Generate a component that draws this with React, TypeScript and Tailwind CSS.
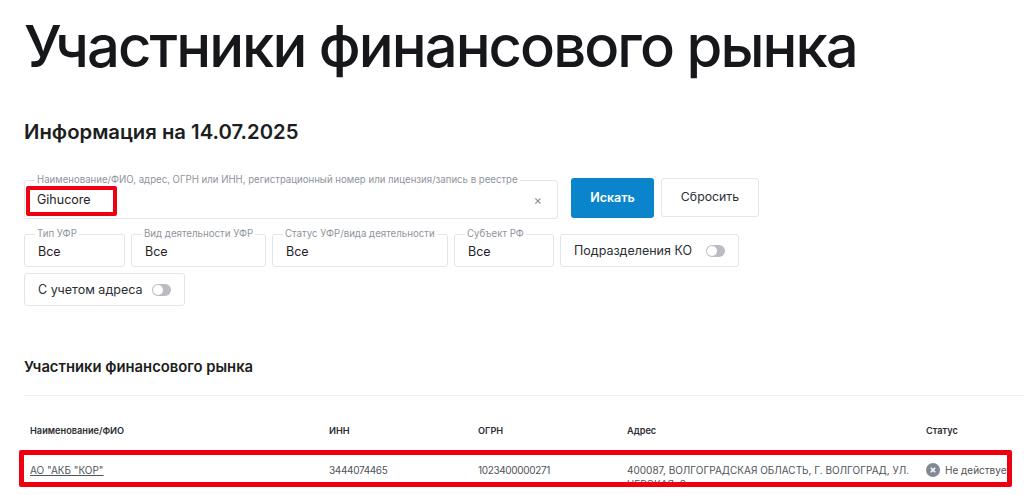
import React from "react";

function Field({ label, value, width }: { label: string; value: string; width: string }) {
  return (
    <fieldset className={`${width} h-[37px] shrink-0 rounded-[3px] border border-[#e3e5e8] pl-[13px] pr-2`}>
      <legend className="-ml-[3px] whitespace-nowrap px-[2px] text-[9.7px] leading-[8px] text-[#8f949c]">{label}</legend>
      <div className="mt-[5px] text-[12.5px] leading-[18px] text-[#1f2226]">{value}</div>
    </fieldset>
  );
}

function Toggle({ label, width }: { label: string; width: string }) {
  return (
    <div className={`${width} flex h-[33px] shrink-0 items-center justify-between rounded-[3px] border border-[#e3e5e8] px-[13px]`}>
      <span className="pt-[2px] text-[12.5px] text-[#2b2e33]">{label}</span>
      <span className="flex h-[12px] w-[19px] items-center rounded-full bg-[#b9bdc3] pl-[1px]">
        <span className="h-[10px] w-[10px] rounded-full bg-white" />
      </span>
    </div>
  );
}

export default function App() {
  return (
    <div className="h-[495px] w-[1024px] overflow-hidden bg-white font-['Inter',sans-serif] text-[#1a1c1f]">
      <div className="pl-6">
        <h1 className="pt-[10px] text-[58px] font-medium leading-[72px] tracking-[-1.95px] text-[#15171a]">
          Участники финансового рынка
        </h1>
        <h2 className="mt-[36px] text-[20.3px] font-semibold leading-[28px] text-[#1c1e21]">Информация на 14.07.2025</h2>

        <div className="mt-[32px] flex items-start">
          <fieldset className="relative -mt-[2px] h-[43px] w-[534px] shrink-0 rounded-[3px] border border-[#e3e5e8] pl-[12px] pr-2">
            <legend className="-ml-[2px] whitespace-nowrap px-[2px] text-[9.65px] leading-[8px] text-[#8f949c]">
              Наименование/ФИО, адрес, ОГРН или ИНН, регистрационный номер или лицензия/запись в реестре
            </legend>
            <div className="flex items-center justify-between pr-[7px] pt-[6px]">
              <span className="text-[12.5px] leading-[20px] text-[#1f2226]">Gihucore</span>
              <span className="text-[13px] leading-[20px] text-[#8b9099]">×</span>
            </div>
            {/* red annotation around the query */}
            <div className="absolute left-[1px] top-[2px] h-[30px] w-[91px] rounded-[2px] border-[4px] border-[#ee0010]" />
          </fieldset>
          <button className="ml-[13px] h-[40px] w-[83px] rounded-[3px] bg-[#0a85cc] text-[12.5px] font-semibold text-white">
            Искать
          </button>
          <button className="ml-[7px] h-[39px] w-[98px] rounded-[3px] border border-[#e3e5e8] text-[12.3px] text-[#2b2e33]">
            Сбросить
          </button>
        </div>

        <div className="mt-[11px] flex items-end gap-[6px]">
          <Field label="Тип УФР" value="Все" width="w-[101px]" />
          <Field label="Вид деятельности УФР" value="Все" width="w-[135px]" />
          <Field label="Статус УФР/вида деятельности" value="Все" width="w-[176px]" />
          <Field label="Субъект РФ" value="Все" width="w-[100px]" />
          <Toggle label="Подразделения КО" width="w-[179px]" />
        </div>
        <div className="mt-[6px] flex">
          <Toggle label="С учетом адреса" width="w-[161px]" />
        </div>

        <h3 className="mt-[51px] text-[14.8px] font-semibold leading-[20px] text-[#1c1e21]">Участники финансового рынка</h3>
        <div className="mt-[18px] h-px bg-[#f0f1f2]" />

        <div className="mt-[29px] grid grid-cols-[299px_149px_149px_299px_80px] pl-[6px] text-[9.2px] font-semibold leading-[12px] text-[#2b2e33]">
          <div>Наименование/ФИО</div>
          <div>ИНН</div>
          <div>ОГРН</div>
          <div>Адрес</div>
          <div>Статус</div>
        </div>

        {/* result row, clipped by the annotation box */}
        <div className="relative -ml-[5px] mt-[13px] h-[37px] w-[993px] overflow-hidden">
          <div className="grid grid-cols-[299px_149px_149px_299px_100px] items-start pl-[11px] pt-[13px] text-[10px] leading-[14px] text-[#4f535a]">
            <a className="underline">АО "АКБ "КОР"</a>
            <div className="tracking-[-0.35px]">3444074465</div>
            <div className="tracking-[-0.35px]">1023400000271</div>
            <div>400087, ВОЛГОГРАДСКАЯ ОБЛАСТЬ, Г. ВОЛГОГРАД, УЛ. ЦЕРСКАЯ, 3</div>
            <div className="flex items-center gap-[5px] whitespace-nowrap">
              <svg viewBox="0 0 14 14" className="h-[14px] w-[14px] shrink-0">
                <circle cx="7" cy="7" r="7" fill="#808994" />
                <path d="M4.8 4.8l4.4 4.4M9.2 4.8l-4.4 4.4" stroke="#fff" strokeWidth="1.5" />
              </svg>
              <span>Не действует</span>
            </div>
          </div>
          <div className="absolute inset-0 rounded-[2px] border-[5px] border-[#ee0010]" />
        </div>
      </div>
    </div>
  );
}
